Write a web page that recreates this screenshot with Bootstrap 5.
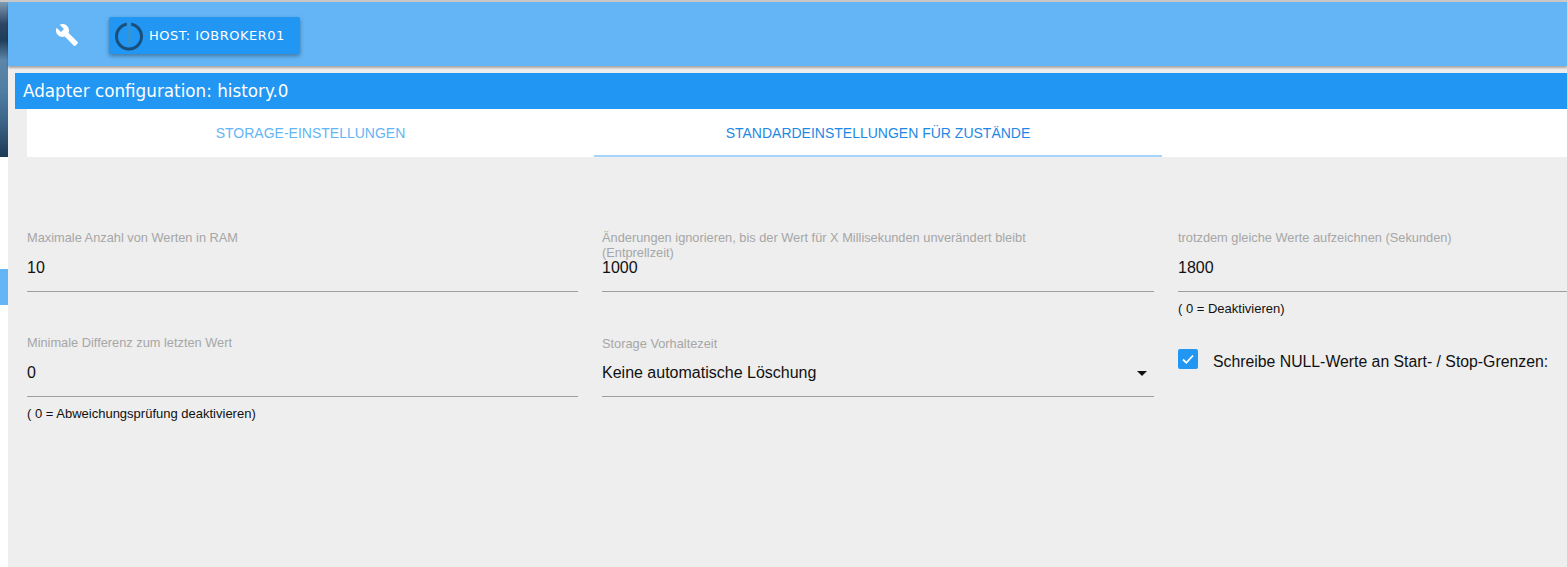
<!DOCTYPE html>
<html lang="de">
<head>
    <meta charset="UTF-8">
    <meta name="viewport" content="width=device-width, initial-scale=1.0">
    <title>Adapter configuration: history.0</title>
    <link href="https://cdn.jsdelivr.net/npm/bootstrap@5.3.0/dist/css/bootstrap.min.css" rel="stylesheet">
    <style>
        html, body {
            height: 567px;
            overflow: hidden;
        }
        body {
            background: #fff;
            font-family: "Liberation Sans", Arial, sans-serif;
        }
        .page-shell {
            height: 567px;
            border-top: 2px solid #c8c8c8;
        }
        .side-strip {
            width: 8px;
            flex: none;
        }
        .side-wallpaper {
            height: 155px;
            background: linear-gradient(180deg, #7f9cb5 0, #2c4663 22px, #1f3d5a 38px, #5d86a8 58px, #4f7da3 90px, #3b6488 120px, #1e3a56 155px);
        }
        .side-active {
            height: 36px;
            margin-top: 112px;
            background: #64b5f6;
        }
        .main-area {
            min-width: 0;
            background: #eee;
        }
        .top-bar {
            height: 64px;
            padding-left: 46px;
            padding-top: 15px;
            background: #64b5f6;
            box-shadow: 0 2px 2px rgba(0, 0, 0, .3);
        }
        .tool-link {
            width: 24px;
            height: 24px;
            margin: 5px 30px 0 1px;
        }
        .host-btn {
            width: 191px;
            height: 37px;
            padding: 0 0 0 5px;
            border: 0;
            border-radius: 2px;
            background: #2196f3;
            color: #fff;
            font-family: "DejaVu Sans", sans-serif;
            font-size: 13px;
            letter-spacing: .5px;
            box-shadow: 0 2px 4px rgba(0, 0, 0, .35);
        }
        .host-logo {
            flex: none;
            margin-right: 5px;
        }
        .config-title {
            height: 36px;
            margin: 7px 0 0 7px;
            padding-left: 8px;
            background: #2196f3;
            color: #fff;
            font-family: "DejaVu Sans", sans-serif;
            font-size: 16.8px;
            line-height: 37px;
        }
        .tab-strip {
            height: 48px;
            margin-left: 19px;
            background: #fff;
        }
        .tab-item {
            width: 567px;
            flex: none;
            padding-top: 16px;
            font-size: 14px;
            line-height: 17px;
            text-align: center;
            color: #64b5f6;
            text-decoration: none;
        }
        .tab-item.is-active {
            width: 568px;
            color: #1e88e5;
            border-bottom: 2px solid #a6d4fa;
        }
        .field-grid {
            padding: 72px 0 0 19px;
            width: 1559px;
        }
        .field-row {
            display: flex;
        }
        .field-row + .field-row {
            margin-top: 11px;
        }
        .field-box {
            flex: none;
            width: 551px;
            margin-right: 24px;
        }
        .field-box:nth-child(2) {
            width: 552px;
        }
        .field-box:last-child {
            width: 389px;
            margin-right: 0;
        }
        .field-label {
            height: 30px;
            padding-top: 1px;
            font-size: 12.8px;
            line-height: 15px;
            color: #a6a6a6;
        }
        .field-label.select-label {
            padding-top: 2px;
        }
        .field-value {
            height: 33px;
            border-bottom: 1px solid #9e9e9e;
            font-size: 16px;
            line-height: 18px;
            color: #111;
        }
        .field-help {
            height: 31px;
            padding-top: 9px;
            font-size: 13px;
            line-height: 15px;
            color: #111;
        }
        .select-value {
            display: flex;
            justify-content: space-between;
        }
        .select-caret {
            width: 0;
            height: 0;
            margin: 7px 7px 0 0;
            border-top: 5px solid #111;
            border-left: 5px solid transparent;
            border-right: 5px solid transparent;
        }
        .check-line {
            height: 94px;
            padding-top: 15px;
            font-size: 15.8px;
            line-height: 26px;
            color: #111;
            white-space: nowrap;
        }
        .check-mark {
            width: 20px;
            height: 20px;
            flex: none;
            margin-right: 15px;
            border-radius: 2px;
            background: #2196f3;
        }
    </style>
</head>
<body>
    <div class="page-shell d-flex">
        <div class="side-strip">
            <div class="side-wallpaper"></div>
            <div class="side-active"></div>
        </div>
        <div class="main-area flex-grow-1">
            <div class="top-bar d-flex align-items-start">
                <a class="tool-link d-block" href="#" aria-label="Settings">
                    <svg width="24" height="24" viewBox="0 0 24 24"><path fill="#fff" d="M22.7 19l-9.100-9.100c.9-2.300.4-5-1.500-6.900-2-2-5-2.400-7.400-1.300L9 6 6 9 1.600 4.700C.4 7.100.9 10.100 2.900 12.100c1.900 1.900 4.600 2.400 6.900 1.500l9.100 9.100c.4.400 1 .4 1.400 0l2.300-2.300c.5-.4.5-1.100.1-1.400z"/></svg>
                </a>
                <button class="host-btn d-flex align-items-center" type="button">
                    <svg class="host-logo" width="30" height="30" viewBox="0 0 30 30">
                        <circle cx="15" cy="15.500" r="12.500" fill="none" stroke="#1a4f7a" stroke-width="3"/>
                        <rect x="12.800" y="0" width="4.400" height="6" fill="#2196f3"/>
                        <rect x="13.500" y="2" width="3" height="3" fill="#3a94cc"/>
                        <rect x="13.500" y="7" width="3" height="16" fill="#3a94cc"/>
                    </svg>
                    <span>HOST: IOBROKER01</span>
                </button>
            </div>
            <div class="config-title">Adapter configuration: history.0</div>
            <div class="tab-strip d-flex">
                <a class="tab-item" href="#">STORAGE-EINSTELLUNGEN</a>
                <a class="tab-item is-active" href="#">STANDARDEINSTELLUNGEN FÜR ZUSTÄNDE</a>
            </div>
            <div class="field-grid">
                <div class="field-row">
                    <div class="field-box">
                        <div class="field-label">Maximale Anzahl von Werten in RAM</div>
                        <div class="field-value">10</div>
                        <div class="field-help"></div>
                    </div>
                    <div class="field-box">
                        <div class="field-label">Änderungen ignorieren, bis der Wert für X Millisekunden unverändert bleibt<br>(Entprellzeit)</div>
                        <div class="field-value">1000</div>
                        <div class="field-help"></div>
                    </div>
                    <div class="field-box">
                        <div class="field-label">trotzdem gleiche Werte aufzeichnen (Sekunden)</div>
                        <div class="field-value">1800</div>
                        <div class="field-help">( 0 = Deaktivieren)</div>
                    </div>
                </div>
                <div class="field-row">
                    <div class="field-box">
                        <div class="field-label">Minimale Differenz zum letzten Wert</div>
                        <div class="field-value">0</div>
                        <div class="field-help">( 0 = Abweichungsprüfung deaktivieren)</div>
                    </div>
                    <div class="field-box">
                        <div class="field-label select-label">Storage Vorhaltezeit</div>
                        <div class="field-value select-value"><span>Keine automatische Löschung</span><span class="select-caret"></span></div>
                    </div>
                    <div class="field-box">
                        <div class="check-line d-flex align-items-start">
                            <span class="check-mark d-flex align-items-center justify-content-center">
                                <svg width="14" height="14" viewBox="0 0 14 14"><path d="M2 7.500l3.300 3.300L12 3.500" fill="none" stroke="#fff" stroke-width="1.800"/></svg>
                            </span>
                            <span>Schreibe NULL-Werte an Start- / Stop-Grenzen:</span>
                        </div>
                    </div>
                </div>
            </div>
        </div>
    </div>
    <script src="https://cdn.jsdelivr.net/npm/bootstrap@5.3.0/dist/js/bootstrap.bundle.min.js"></script>
</body>
</html>
